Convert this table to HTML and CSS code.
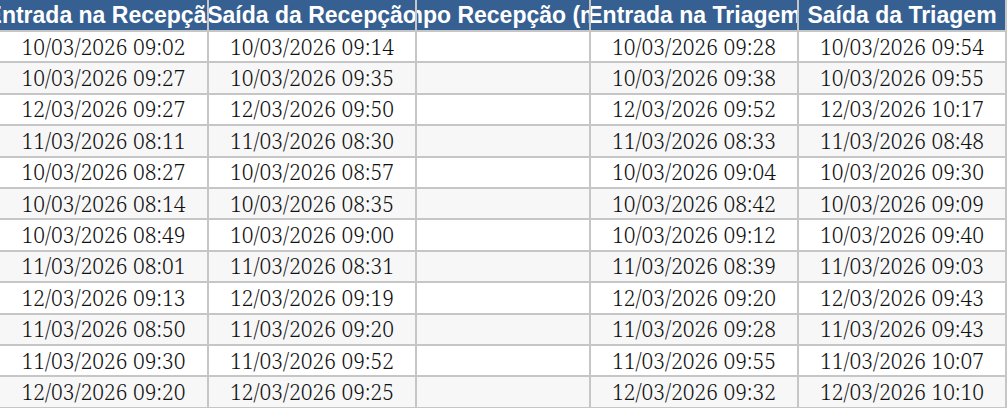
FILE: index.html
```html
<!DOCTYPE html>
<html lang="pt-BR">
<head>
<meta charset="utf-8">
<title>Tabela</title>
<link rel="stylesheet" href="styles.css">
</head>
<body>
<table class="grid">
  <colgroup>
    <col class="c1"><col class="c2"><col class="c3"><col class="c4"><col class="c5">
  </colgroup>
  <thead>
    <tr>
      <th><div class="cell">Entrada na Recepção</div></th>
      <th><div class="cell">Saída da Recepção</div></th>
      <th><div class="cell">Tempo Recepção (min)</div></th>
      <th><div class="cell">Entrada na Triagem</div></th>
      <th><div class="cell">Saída da Triagem</div></th>
    </tr>
  </thead>
  <tbody>
    <tr><td><div class="cell">10/03/2026 09:02</div></td><td><div class="cell">10/03/2026 09:14</div></td><td></td><td><div class="cell">10/03/2026 09:28</div></td><td><div class="cell">10/03/2026 09:54</div></td></tr>
    <tr><td><div class="cell">10/03/2026 09:27</div></td><td><div class="cell">10/03/2026 09:35</div></td><td></td><td><div class="cell">10/03/2026 09:38</div></td><td><div class="cell">10/03/2026 09:55</div></td></tr>
    <tr><td><div class="cell">12/03/2026 09:27</div></td><td><div class="cell">12/03/2026 09:50</div></td><td></td><td><div class="cell">12/03/2026 09:52</div></td><td><div class="cell">12/03/2026 10:17</div></td></tr>
    <tr><td><div class="cell">11/03/2026 08:11</div></td><td><div class="cell">11/03/2026 08:30</div></td><td></td><td><div class="cell">11/03/2026 08:33</div></td><td><div class="cell">11/03/2026 08:48</div></td></tr>
    <tr><td><div class="cell">10/03/2026 08:27</div></td><td><div class="cell">10/03/2026 08:57</div></td><td></td><td><div class="cell">10/03/2026 09:04</div></td><td><div class="cell">10/03/2026 09:30</div></td></tr>
    <tr><td><div class="cell">10/03/2026 08:14</div></td><td><div class="cell">10/03/2026 08:35</div></td><td></td><td><div class="cell">10/03/2026 08:42</div></td><td><div class="cell">10/03/2026 09:09</div></td></tr>
    <tr><td><div class="cell">10/03/2026 08:49</div></td><td><div class="cell">10/03/2026 09:00</div></td><td></td><td><div class="cell">10/03/2026 09:12</div></td><td><div class="cell">10/03/2026 09:40</div></td></tr>
    <tr><td><div class="cell">11/03/2026 08:01</div></td><td><div class="cell">11/03/2026 08:31</div></td><td></td><td><div class="cell">11/03/2026 08:39</div></td><td><div class="cell">11/03/2026 09:03</div></td></tr>
    <tr><td><div class="cell">12/03/2026 09:13</div></td><td><div class="cell">12/03/2026 09:19</div></td><td></td><td><div class="cell">12/03/2026 09:20</div></td><td><div class="cell">12/03/2026 09:43</div></td></tr>
    <tr><td><div class="cell">11/03/2026 08:50</div></td><td><div class="cell">11/03/2026 09:20</div></td><td></td><td><div class="cell">11/03/2026 09:28</div></td><td><div class="cell">11/03/2026 09:43</div></td></tr>
    <tr><td><div class="cell">11/03/2026 09:30</div></td><td><div class="cell">11/03/2026 09:52</div></td><td></td><td><div class="cell">11/03/2026 09:55</div></td><td><div class="cell">11/03/2026 10:07</div></td></tr>
    <tr><td><div class="cell">12/03/2026 09:20</div></td><td><div class="cell">12/03/2026 09:25</div></td><td></td><td><div class="cell">12/03/2026 09:32</div></td><td><div class="cell">12/03/2026 10:10</div></td></tr>
  </tbody>
</table>
</body>
</html>
```

FILE: styles.css
```css
html, body {
  margin: 0;
  padding: 0;
  background: #ffffff;
}

.grid {
  table-layout: fixed;
  border-collapse: separate;
  border-spacing: 0;
  width: 1007px;
  border-left: 1px solid #c6c6c6;
  margin-left: -1px;
}

.c1 { width: 209px; }
.c2 { width: 208px; }
.c3 { width: 174px; }
.c4 { width: 208px; }
.c5 { width: 208px; }

.grid th,
.grid td {
  padding: 0;
  height: 29.4px;
  border-right: 2px solid #c6c6c6;
  border-bottom: 2px solid #c6c6c6;
  overflow: hidden;
}

.grid th {
  height: 30px;
  background: #366092;
  color: #ffffff;
  font-family: "Liberation Sans", Arial, sans-serif;
  font-weight: bold;
  font-size: 23px;
}

.grid td {
  color: #111111;
  font-family: "Noto Serif", "Liberation Serif", serif;
  font-weight: 300;
  font-size: 21px;
}

.grid tbody tr:nth-child(odd) td { background: #ffffff; }
.grid tbody tr:nth-child(even) td { background: #f7f7f7; }

.cell {
  display: flex;
  justify-content: center;
  align-items: center;
  white-space: nowrap;
  overflow: hidden;
  width: 100%;
}
```
